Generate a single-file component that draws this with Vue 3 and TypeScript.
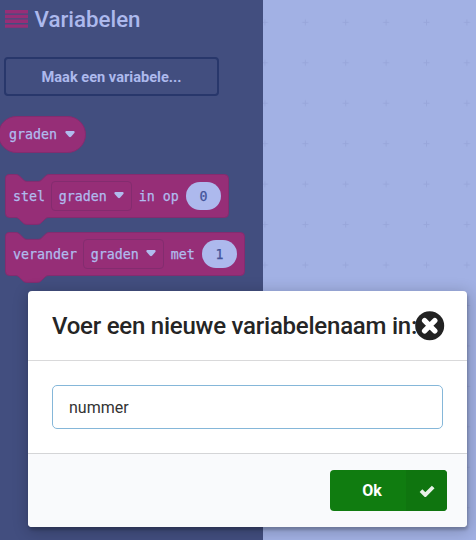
<script setup lang="ts">
import { ref } from 'vue'

interface StatementBlock {
  id: string
  width: number
  label: string
  variable: string
  joiner: string
  value: string
}

const variableName = ref('nummer')

const statements: StatementBlock[] = [
  { id: 'set', width: 223, label: 'stel', variable: 'graden', joiner: 'in op', value: '0' },
  { id: 'change', width: 239, label: 'verander', variable: 'graden', joiner: 'met', value: '1' },
]

// Outline of a stackable block: notch in the top edge, matching tab below.
function outline(w: number): string {
  return [
    'M.5 4.5a4 4 0 0 1 4-4H10.5c2 0 3 .6 4.200 1.700l3.600 3.500c1.200 1.200 2.200 1.700 4 1.700h10.500c1.800 0 2.800-.5 4-1.700l3.600-3.500c1.200-1.200 2.200-1.700 4.200-1.700',
    `H${w - 3.5}a4 4 0 0 1 4 4V39.500a4 4 0 0 1-4 4`,
    'H44.100c-2 0-3 .5-4.200 1.700l-3.600 3.500c-1.200 1.200-2.200 1.700-4 1.700H21.800c-1.800 0-2.800-.5-4-1.700l-3.600-3.500c-1.200-1.200-2.200-1.700-4.200-1.700H4.500a4 4 0 0 1-4-4z',
  ].join('')
}
</script>

<template>
  <div class="editor">
    <aside class="flyout">
      <h2 class="heading">
        <svg class="bars" width="23" height="18" viewBox="0 0 23 18">
          <path d="M0 0h23v3.400H0zM0 4.800h23v3.400H0zM0 9.600h23v3.400H0zM0 14.400h23v3.400H0z" />
        </svg>
        <span>Variabelen</span>
      </h2>
      <button class="make" type="button">Maak een variabele...</button>
      <div class="reporter">
        <span>graden</span>
        <svg class="arrow" width="10" height="7" viewBox="0 0 10 7"><path d="M1.200 0h7.600q1.500.6.5 2L6 5.800q-1 .9-2 0L.7 2Q-.3.6 1.200 0z" /></svg>
      </div>
      <div v-for="s in statements" :key="s.id" class="statement" :style="{ width: `${s.width + 1}px` }">
        <svg class="shape" :width="s.width + 1" height="51"><path :d="outline(s.width)" /></svg>
        <span class="label">{{ s.label }}</span>
        <span class="dropdown">
          <span>{{ s.variable }}</span>
          <svg class="arrow" width="10" height="7" viewBox="0 0 10 7"><path d="M1.200 0h7.600q1.500.6.5 2L6 5.800q-1 .9-2 0L.7 2Q-.3.6 1.200 0z" /></svg>
        </span>
        <span class="joiner">{{ s.joiner }}</span>
        <span class="value">{{ s.value }}</span>
      </div>
    </aside>
    <main class="workspace">
      <svg width="213" height="540">
        <defs>
          <pattern id="grid" x="-18.300" y="2.100" width="40.400" height="40.450" patternUnits="userSpaceOnUse">
            <path d="M17.200 20.200h6M20.200 17.200v6" />
          </pattern>
        </defs>
        <rect width="213" height="540" fill="url(#grid)" />
      </svg>
    </main>

    <section class="modal" role="dialog">
      <header class="modal-header">
        <h3>Voer een nieuwe variabelenaam in:</h3>
        <svg class="close" width="30" height="30" viewBox="0 0 30 30">
          <circle cx="14.700" cy="14.800" r="14.500" />
          <path d="M9.600 9.700l10.200 10.200M19.800 9.700L9.600 19.900" />
        </svg>
      </header>
      <div class="modal-body">
        <input v-model="variableName" type="text" />
      </div>
      <footer class="modal-footer">
        <button class="ok" type="button">
          <span class="ok-label">Ok</span>
          <span class="ok-icon">
            <svg width="16" height="12" viewBox="0 0 16 12"><path d="M2 5.600l4.300 4.300L14.200 2" /></svg>
          </span>
        </button>
      </footer>
    </section>
  </div>
</template>

<style>
body {
  margin: 0;
}
</style>

<style scoped>
.editor {
  position: relative;
  display: flex;
  width: 476px;
  height: 540px;
  overflow: hidden;
  font-family: Roboto, sans-serif;
}

.flyout {
  box-sizing: border-box;
  width: 263px;
  padding: 6px 5px 0;
  background: #424e7f;
}

.heading {
  display: flex;
  align-items: center;
  gap: 6.500px;
  height: 26px;
  margin: 0;
  color: #adb9ed;
  font-size: 22.300px;
  font-weight: 500;
}

.bars {
  margin-top: -1px;
  fill: #962e77;
}

.make {
  display: block;
  box-sizing: border-box;
  width: 215px;
  height: 39px;
  margin: 25px 0 0 -1px;
  padding: 0;
  border: 2px solid #28376b;
  border-radius: 4px;
  background: transparent;
  color: #adb9ed;
  font: 700 14.600px Roboto, sans-serif;
}

.reporter,
.statement {
  display: flex;
  align-items: center;
  color: #b0bcee;
  font: 13.300px "DejaVu Sans Mono", monospace;
  white-space: pre;
  -webkit-text-stroke: .25px #b0bcee;
}

.reporter {
  box-sizing: border-box;
  width: 88px;
  height: 37px;
  margin: 20px 0 20.500px -7px;
  padding-left: 10px;
  gap: 8px;
  border: 1px solid #832c6f;
  border-radius: 19px;
  background: #962e77;
}

.arrow {
  flex: none;
  fill: #b0bcee;
}

.statement {
  position: relative;
  box-sizing: border-box;
  height: 44px;
  margin-bottom: 14px;
  padding: 0 8px;
}

.shape {
  position: absolute;
  top: 0;
  left: 0;
  fill: #962e77;
  stroke: #832c6f;
}

.statement > span {
  position: relative;
}

.label,
.joiner,
.dropdown > span {
  padding-top: 1px;
}

.dropdown {
  display: flex;
  align-items: center;
  gap: 7px;
  box-sizing: border-box;
  width: 81px;
  height: 30px;
  margin-left: 5.800px;
  padding-left: 7px;
  border: 1px solid #832c6f;
  border-radius: 4px;
}

.joiner {
  margin-left: 7px;
}

.value {
  width: 35px;
  height: 28px;
  margin-left: auto;
  border-radius: 14px;
  background: #adb9ed;
  color: #44549a;
  line-height: 30px;
  text-align: center;
  -webkit-text-stroke-color: #44549a;
}

.workspace {
  flex: 1;
  background: #a2b1e4;
}

.workspace path {
  stroke: #98a6da;
  stroke-width: 1;
}

.modal {
  position: absolute;
  top: 291px;
  left: 28px;
  display: flex;
  flex-direction: column;
  width: 439px;
  height: 236px;
  overflow: hidden;
  border-radius: 4px;
  background: #fff;
  box-shadow: 1px 3px 3px rgba(0, 0, 0, .2), 1px 3px 15px 2px rgba(0, 0, 0, .2);
}

.modal-header {
  display: flex;
  align-items: center;
  box-sizing: border-box;
  height: 70px;
  padding-left: 24px;
  border-bottom: 1px solid #d9d9da;
  color: #252525;
}

.modal-header h3 {
  width: 363px;
  margin: 0;
  font-size: 24px;
  font-weight: 500;
  letter-spacing: -.23px;
  white-space: nowrap;
}

.close {
  position: relative;
  flex: none;
  fill: #222;
}

.close path {
  stroke: #fff;
  stroke-width: 5.400;
  stroke-linecap: round;
}

.modal-body {
  box-sizing: border-box;
  height: 92px;
  padding: 24px;
}

.modal-body input {
  box-sizing: border-box;
  width: 391px;
  height: 44px;
  padding: 0 16px;
  border: 1px solid #85b7d9;
  border-radius: 5px;
  outline: none;
  color: #333;
  font: 16px Roboto, sans-serif;
}

.modal-footer {
  display: flex;
  flex: 1;
  justify-content: flex-end;
  padding: 16px 20px 0 0;
  border-top: 1px solid #d4d5d7;
  background: #f9fafc;
}

.ok {
  display: flex;
  width: 117px;
  height: 41px;
  padding: 0;
  overflow: hidden;
  border: 0;
  border-radius: 4px;
  background: #107c10;
  color: #fff;
  font: 700 16px/41px Roboto, sans-serif;
}

.ok-label {
  flex: 1;
  padding-left: 8px;
  text-align: center;
}

.ok-icon {
  display: flex;
  align-items: center;
  justify-content: center;
  width: 41px;
  background: #0f750f;
}

.ok-icon path {
  fill: none;
  stroke: #e7f1e7;
  stroke-width: 3.800;
}
</style>
